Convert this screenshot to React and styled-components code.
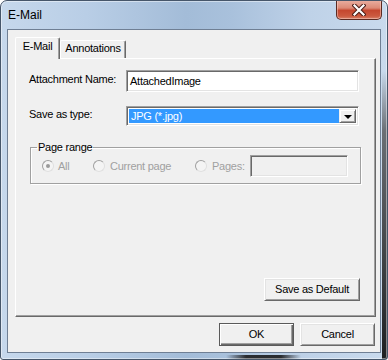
import React from 'react';
import styled, { createGlobalStyle } from 'styled-components';

const Global = createGlobalStyle`
  html, body { margin: 0; padding: 0; background: #ffffff; }
  body { font-family: "Liberation Sans", Arial, sans-serif; }
  * { box-sizing: border-box; }
`;

const Window = styled.div`
  width: 388px;
  height: 360px;
  display: flex;
  flex-direction: column;
  border: 1px solid #46566a;
  border-radius: 7px 7px 3px 3px;
  overflow: hidden;
  box-shadow: inset 0 0 0 1px rgba(255, 255, 255, 0.45);
  background:
    linear-gradient(180deg, rgba(60, 62, 66, 0) 0px, rgba(60, 62, 66, 0) 70px, #6b6f75 130px, #1e1f21 100%) right top / 5px 100% no-repeat,
    linear-gradient(90deg, rgba(40, 40, 44, 0) 0, rgba(40, 40, 44, 0) 225px, #2a2c30 245px, #2a2c30 280px, rgba(40, 40, 44, 0) 300px) left bottom / 100% 4px no-repeat,
    linear-gradient(90deg, #c6d8ec 0%, #b9cee6 22%, #a3bcd8 48%, #a9c1dc 60%, #bfd2e8 80%, #c9daed 100%);
`;

const TitleBar = styled.div`
  flex: none;
  height: 28px;
  display: flex;
  justify-content: space-between;
  align-items: flex-start;
  padding-left: 7px;
`;

const Title = styled.div`
  margin-top: 7px;
  font-family: "Liberation Sans", Arial, sans-serif;
  font-size: 12px;
  line-height: 14px;
  color: #000;
`;

const CloseButton = styled.div`
  width: 46px;
  height: 20px;
  margin-top: -1px;
  margin-right: 5px;
  border: 1px solid #5b2a22;
  border-top: none;
  border-radius: 0 0 5px 5px;
  background: linear-gradient(180deg, #eab0a2 0%, #dc8a76 42%, #c5472f 55%, #cc5a40 85%, #d8836b 100%);
  box-shadow: inset 0 0 0 1px rgba(255, 220, 210, 0.45);
  display: flex;
  align-items: center;
  justify-content: center;
`;

const Client = styled.div`
  flex: 1;
  margin: 0 6px 6px 6px;
  border: 1px solid #6f7f94;
  background: #f0f0f0;
  display: flex;
  flex-direction: column;
  padding: 7px 4px 6px 7px;
  font-size: 11px;
  letter-spacing: -0.25px;
  color: #000;
`;

const TabStrip = styled.div`
  flex: none;
  height: 21px;
  display: flex;
  align-items: flex-end;
  position: relative;
  z-index: 1;
`;

const Tab = styled.div`
  width: ${(p) => p.$w}px;
  height: ${(p) => (p.$active ? 22 : 18)}px;
  margin-bottom: ${(p) => (p.$active ? -1 : 0)}px;
  padding-top: ${(p) => (p.$active ? 2 : 1)}px;
  border-top: 1px solid #ffffff;
  border-left: 1px solid #ffffff;
  border-right: 1px solid #696969;
  box-shadow: inset -1px 0 0 #a0a0a0;
  border-radius: 2px 2px 0 0;
  background: #f0f0f0;
  text-align: center;
  line-height: 13px;
  white-space: nowrap;
`;

const Panel = styled.div`
  flex: 1;
  display: flex;
  flex-direction: column;
  border: 1px solid;
  border-color: #ffffff #696969 #696969 #ffffff;
  box-shadow: inset -1px -1px 0 #a0a0a0;
  padding: 11px 15px 15px 13px;
  background: #f0f0f0;
`;

const FieldGrid = styled.div`
  display: grid;
  grid-template-columns: 97px 233px;
  row-gap: 14px;
  align-items: center;
`;

const Label = styled.div`
  line-height: 13px;
  margin-top: -3px;
  white-space: nowrap;
`;

const Sunken = styled.div`
  height: ${(p) => p.$h}px;
  width: ${(p) => (p.$w ? `${p.$w}px` : 'auto')};
  border: 1px solid;
  border-color: #a0a0a0 #ffffff #ffffff #a0a0a0;
  box-shadow: inset 1px 1px 0 #696969, inset -1px -1px 0 #e3e3e3;
  background: ${(p) => (p.$disabled ? '#f0f0f0' : '#ffffff')};
  padding: 2px;
  display: flex;
  align-items: stretch;
`;

const InputText = styled.div`
  flex: 1;
  padding-left: 1px;
  line-height: 16px;
  white-space: nowrap;
  overflow: hidden;
`;

const Selection = styled.div`
  flex: 1;
  background: #3399ff;
  color: #ffffff;
  padding-left: 2px;
  line-height: 15px;
  white-space: nowrap;
  overflow: hidden;
`;

const ArrowButton = styled.div`
  width: 17px;
  border: 1px solid;
  border-color: #f0f0f0 #696969 #696969 #f0f0f0;
  box-shadow: inset 1px 1px 0 #ffffff, inset -1px -1px 0 #a0a0a0;
  background: #f0f0f0;
  display: flex;
  align-items: center;
  justify-content: center;
`;

const Triangle = styled.div`
  width: 0;
  height: 0;
  border-left: 4px solid transparent;
  border-right: 4px solid transparent;
  border-top: 4px solid #000;
  margin-top: 1px;
`;

const Group = styled.fieldset`
  margin: 14px -1px 0 1px;
  padding: 0 10px 6px 11px;
  border: 1px solid #a0a0a0;
  box-shadow: inset 1px 1px 0 #ffffff, 1px 1px 0 #ffffff;
  min-width: 0;
`;

const Legend = styled.legend`
  margin-left: -5px;
  padding: 0 1px;
  line-height: 15px;
  font-size: 11px;
  color: #000;
`;

const RadioRow = styled.div`
  display: flex;
  align-items: center;
  height: 22px;
`;

const RadioItem = styled.div`
  width: ${(p) => (p.$w ? `${p.$w}px` : 'auto')};
  display: flex;
  align-items: center;
  gap: ${(p) => p.$gap || 4}px;
  color: #a0a0a0;
  white-space: nowrap;
  line-height: 13px;
`;

const RadioCircle = styled.div`
  width: 12px;
  height: 12px;
  flex: none;
  border-radius: 50%;
  border: 1px solid;
  border-color: #a0a0a0 #e0e0e0 #e0e0e0 #a0a0a0;
  background: #f4f4f4;
  display: flex;
  align-items: center;
  justify-content: center;
  &::after {
    content: '';
    width: 4px;
    height: 4px;
    border-radius: 50%;
    background: ${(p) => (p.$checked ? '#9a9a9a' : 'transparent')};
  }
`;

const PagesBox = styled(Sunken)`
  margin-left: 5px;
`;

const Button = styled.div`
  width: ${(p) => p.$w}px;
  height: 23px;
  flex: none;
  background: #f0f0f0;
  border: 1px solid;
  border-color: ${(p) => (p.$default ? '#5a5a5a' : '#ffffff #696969 #696969 #ffffff')};
  box-shadow: ${(p) =>
    p.$default
      ? 'inset 1px 1px 0 #ffffff, inset -1px -1px 0 #696969, inset -2px -2px 0 #a0a0a0'
      : 'inset 1px 1px 0 #e3e3e3, inset -1px -1px 0 #a0a0a0'};
  display: flex;
  align-items: center;
  justify-content: center;
  line-height: 13px;
  color: #000;
  white-space: nowrap;
`;

const DefaultRow = styled.div`
  margin-top: auto;
  display: flex;
  justify-content: flex-end;
`;

const ButtonRow = styled.div`
  flex: none;
  margin-top: 6px;
  padding-right: 1px;
  display: flex;
  justify-content: flex-end;
  gap: 6px;
`;

function CloseGlyph() {
  return (
    <svg width="14" height="12" viewBox="0 0 14 12">
      <path d="M2.5 1.5 L11.5 10.5 M11.5 1.5 L2.5 10.5" stroke="#4a1d16" strokeWidth="4.2" strokeLinecap="square" />
      <path d="M2.5 1.5 L11.5 10.5 M11.5 1.5 L2.5 10.5" stroke="#ffffff" strokeWidth="2.2" strokeLinecap="square" />
    </svg>
  );
}

export default function App() {
  return (
    <>
      <Global />
      <Window>
        <TitleBar>
          <Title>E-Mail</Title>
          <CloseButton>
            <CloseGlyph />
          </CloseButton>
        </TitleBar>
        <Client>
          <TabStrip>
            <Tab $active $w={45}>E-Mail</Tab>
            <Tab $w={66}>Annotations</Tab>
          </TabStrip>
          <Panel>
            <FieldGrid>
              <Label>Attachment Name:</Label>
              <Sunken $h={22}>
                <InputText>AttachedImage</InputText>
              </Sunken>
              <Label>Save as type:</Label>
              <Sunken $h={20}>
                <Selection>JPG (*.jpg)</Selection>
                <ArrowButton>
                  <Triangle />
                </ArrowButton>
              </Sunken>
            </FieldGrid>
            <Group>
              <Legend>Page range</Legend>
              <RadioRow>
                <RadioItem $w={51} $gap={4}>
                  <RadioCircle $checked />
                  All
                </RadioItem>
                <RadioItem $w={102} $gap={5}>
                  <RadioCircle />
                  Current page
                </RadioItem>
                <RadioItem $gap={5}>
                  <RadioCircle />
                  Pages:
                </RadioItem>
                <PagesBox $h={22} $w={98} $disabled />
              </RadioRow>
            </Group>
            <DefaultRow>
              <Button $w={96}>Save as Default</Button>
            </DefaultRow>
          </Panel>
          <ButtonRow>
            <Button $w={75} $default>OK</Button>
            <Button $w={75}>Cancel</Button>
          </ButtonRow>
        </Client>
      </Window>
    </>
  );
}
